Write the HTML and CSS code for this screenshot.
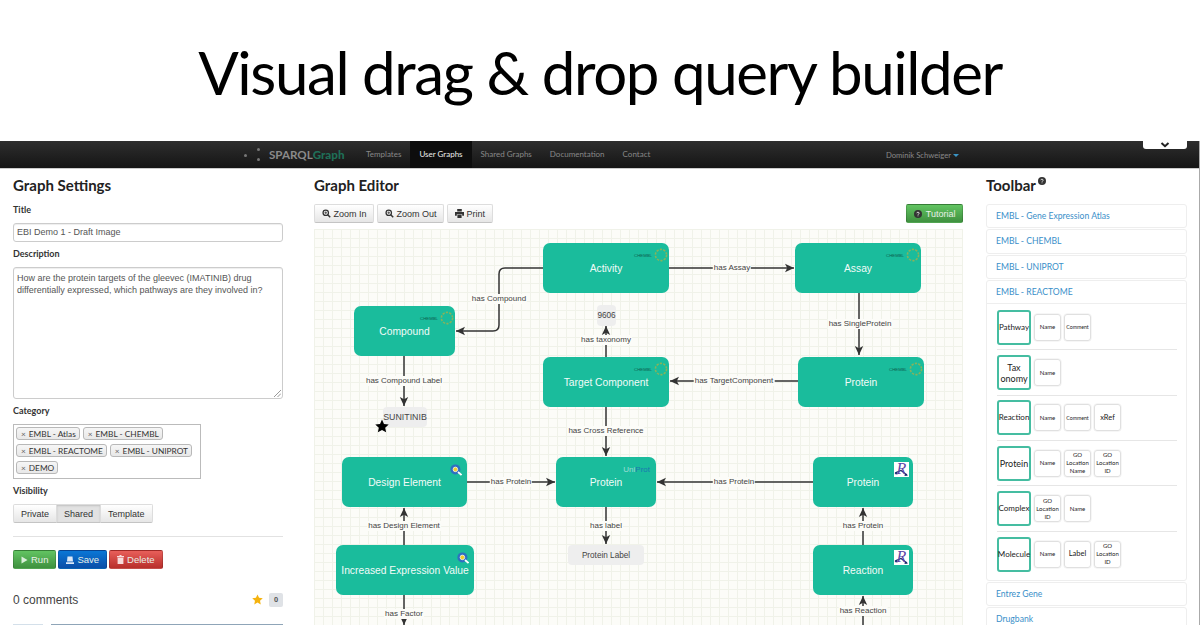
FILE: index.html
```html
<!DOCTYPE html>
<html lang="en">
<head>
    <meta charset="UTF-8">
    <title>Visual drag &amp; drop query builder</title>
    <link rel="stylesheet" href="styles.css">
</head>
<body>
    <svg class="defs" width="0" height="0">
        <defs>
            <marker id="arrow" markerWidth="10" markerHeight="10" refX="9" refY="5" orient="auto" markerUnits="userSpaceOnUse">
                <path d="M0 0.8 L9 5 L0 9.2 L2.2 5 Z" fill="#333"/>
            </marker>
            <symbol id="zoom" viewBox="0 0 12 12">
                <circle cx="5" cy="5" r="3.6" fill="none" stroke="#333" stroke-width="1.7"/>
                <path d="M7.6 7.6 L11 11" stroke="#333" stroke-width="2"/>
                <path d="M3.2 5 H6.8 M5 3.2 V6.8" stroke="#333" stroke-width="1"/>
            </symbol>
            <symbol id="help" viewBox="0 0 12 12">
                <circle cx="6" cy="6" r="6" fill="#333"/>
                <path d="M4.2 4.8 C4.2 2.8 7.8 2.8 7.8 4.8 C7.8 6 6 6 6 7.2" fill="none" stroke="#fff" stroke-width="1.2"/>
                <rect x="5.4" y="8.2" width="1.2" height="1.2" fill="#fff"/>
            </symbol>
            <symbol id="chembl" viewBox="0 0 16 16">
                <circle cx="8" cy="8" r="6.4" fill="none" stroke="#86b35c" stroke-width="1.8" stroke-dasharray="2.6 1.4"/>
            </symbol>
            <symbol id="atlas" viewBox="0 0 12 12">
                <circle cx="5.4" cy="5.4" r="5" fill="#2f6fc0"/>
                <circle cx="5.4" cy="5.4" r="2.3" fill="#f2cf2d" stroke="#fff" stroke-width="0.7"/>
                <path d="M8 8 L11.5 11" stroke="#fff" stroke-width="1.8"/>
            </symbol>
            <symbol id="reactome" viewBox="0 0 15 15">
                <rect width="15" height="15" fill="#fff"/>
                <path d="M1 11 L7 8.5 L13 13" fill="none" stroke="#1b2a6b" stroke-width="1.2"/>
                <path d="M11 11 L14 13.5 L10.5 14 Z M0.5 12 L3 9.5 L3.5 12.5 Z" fill="#1b2a6b"/>
            </symbol>
        </defs>
    </svg>

    <header class="hero">
        <h1>Visual drag &amp; drop query builder</h1>
    </header>

    <div class="app">
        <nav class="navbar">
            <div class="brand">
                <span class="brand-dots"><i></i><i></i><i></i></span>
                <span class="brand-name">SPARQL<b>Graph</b></span>
            </div>
            <ul class="nav-links">
                <li>Templates</li>
                <li class="active">User Graphs</li>
                <li>Shared Graphs</li>
                <li>Documentation</li>
                <li>Contact</li>
            </ul>
            <div class="nav-user">Dominik Schweiger<span class="caret"></span></div>
            <div class="nav-tab">
                <svg width="10" height="6" viewBox="0 0 10 6"><path d="M1.5 1 L5 4.2 L8.5 1" fill="none" stroke="#222" stroke-width="2"/></svg>
            </div>
        </nav>

        <main class="columns">
            <section class="settings">
                <h2>Graph Settings</h2>
                <label class="field-label">Title</label>
                <div class="input">EBI Demo 1 - Draft Image</div>
                <label class="field-label">Description</label>
                <div class="input textarea">How are the protein targets of the gleevec (IMATINIB) drug differentially expressed, which pathways are they involved in?
                    <svg class="grip" width="7" height="7" viewBox="0 0 7 7"><path d="M0 7 L7 0 M3.5 7 L7 3.5" stroke="#999" stroke-width="1"/></svg>
                </div>
                <label class="field-label">Category</label>
                <div class="tags">
                    <span class="tag"><i>×</i>EMBL - Atlas</span>
                    <span class="tag"><i>×</i>EMBL - CHEMBL</span>
                    <span class="tag"><i>×</i>EMBL - REACTOME</span>
                    <span class="tag"><i>×</i>EMBL - UNIPROT</span>
                    <span class="tag"><i>×</i>DEMO</span>
                </div>
                <label class="field-label">Visibility</label>
                <div class="btn-group">
                    <button class="btn">Private</button>
                    <button class="btn pressed">Shared</button>
                    <button class="btn">Template</button>
                </div>
                <hr class="divider">
                <div class="actions">
                    <button class="btn btn-green">
                        <svg width="7" height="8" viewBox="0 0 7 8"><path d="M0.5 0.5 L6.5 4 L0.5 7.5 Z" fill="#d9efd9"/></svg>Run
                    </button>
                    <button class="btn btn-blue">
                        <svg width="8" height="8" viewBox="0 0 8 8"><path d="M1.5 0.5 H6.5 L7 5.5 H1 Z M0 6.2 H8 V8 H0 Z" fill="#dbe8f7"/></svg>Save
                    </button>
                    <button class="btn btn-red">
                        <svg width="7" height="9" viewBox="0 0 7 9"><path d="M2.5 0 H4.5 V1 H7 V2.2 H0 V1 H2.5 Z M0.6 2.8 H6.4 V9 H0.6 Z" fill="#f7dcdc"/></svg>Delete
                    </button>
                </div>
                <div class="comments-head">
                    <span>0 comments</span>
                    <span class="rating">
                        <svg width="11" height="11" viewBox="0 0 24 24"><path d="M12 1 L15.4 8.4 L23.5 9.3 L17.5 14.8 L19.1 22.8 L12 18.8 L4.9 22.8 L6.5 14.8 L0.5 9.3 L8.6 8.4 Z" fill="#f5b30f"/></svg>
                        <span class="count">0</span>
                    </span>
                </div>
                <div class="comment-form">
                    <div class="comment-avatar"></div>
                    <div class="comment-box"></div>
                </div>
            </section>

            <section class="editor">
                <h2>Graph Editor</h2>
                <div class="editor-bar">
                    <button class="btn"><svg width="9" height="9"><use href="#zoom"/></svg>Zoom In</button>
                    <button class="btn"><svg width="9" height="9"><use href="#zoom"/></svg>Zoom Out</button>
                    <button class="btn">
                        <svg width="9" height="9" viewBox="0 0 9 9"><path d="M2.2 0 H6.8 V2.5 H2.2 Z M0 3 H9 V6.8 H7.2 V5.2 H1.8 V6.8 H0 Z M2.4 5.8 H6.6 V9 H2.4 Z" fill="#333"/></svg>Print
                    </button>
                    <button class="btn btn-green tutorial"><svg width="8" height="8"><use href="#help"/></svg>Tutorial</button>
                </div>

                <div class="canvas">
                    <svg class="edges" width="649" height="396" viewBox="0 0 649 396">
                        <g fill="none" stroke="#333" stroke-width="1.5" marker-end="url(#arrow)">
                            <path d="M229 39 H191 Q185 39 185 45 V96 Q185 102 179 102 H142"/>
                            <path d="M355 39 H480"/>
                            <path d="M545 64 V126"/>
                            <path d="M292 128 V97"/>
                            <path d="M484 152 H356"/>
                            <path d="M90 127 V177"/>
                            <path d="M292 178 V227"/>
                            <path d="M153 253 H241"/>
                            <path d="M499 253 H343"/>
                            <path d="M292 278 V315"/>
                            <path d="M90 316 V279"/>
                            <path d="M549 316 V279"/>
                            <path d="M549 396 V367"/>
                            <path d="M90 366 V396"/>
                        </g>
                    </svg>

                    <span class="edge-label e-compound">has Compound</span>
                    <span class="edge-label e-assay">has Assay</span>
                    <span class="edge-label e-single">has SingleProtein</span>
                    <span class="edge-label e-taxonomy">has taxonomy</span>
                    <span class="edge-label e-target">has TargetComponent</span>
                    <span class="edge-label e-cmplabel">has Compound Label</span>
                    <span class="edge-label e-cross">has Cross Reference</span>
                    <span class="edge-label e-protein1">has Protein</span>
                    <span class="edge-label e-protein2">has Protein</span>
                    <span class="edge-label e-label">has label</span>
                    <span class="edge-label e-design">has Design Element</span>
                    <span class="edge-label e-protein3">has Protein</span>
                    <span class="edge-label e-factor">has Factor</span>
                    <span class="edge-label e-reaction">has Reaction</span>

                    <div class="node n-activity">Activity<span class="src-chembl">CHEMBL<svg width="14" height="14"><use href="#chembl"/></svg></span></div>
                    <div class="node n-assay">Assay<span class="src-chembl">CHEMBL<svg width="14" height="14"><use href="#chembl"/></svg></span></div>
                    <div class="node n-compound">Compound<span class="src-chembl">CHEMBL<svg width="14" height="14"><use href="#chembl"/></svg></span></div>
                    <div class="node n-target">Target Component<span class="src-chembl">CHEMBL<svg width="14" height="14"><use href="#chembl"/></svg></span></div>
                    <div class="node n-protein-a">Protein<span class="src-chembl">CHEMBL<svg width="14" height="14"><use href="#chembl"/></svg></span></div>
                    <div class="node n-design">Design Element<svg class="src-icon" width="12" height="12"><use href="#atlas"/></svg></div>
                    <div class="node n-protein-b">Protein<span class="src-uniprot">Uni<b>Prot</b></span></div>
                    <div class="node n-protein-c">Protein<span class="src-reactome"><svg width="15" height="15"><use href="#reactome"/></svg><i>R</i></span></div>
                    <div class="node n-expression">Increased Expression Value<svg class="src-icon" width="12" height="12"><use href="#atlas"/></svg></div>
                    <div class="node n-reaction">Reaction<span class="src-reactome"><svg width="15" height="15"><use href="#reactome"/></svg><i>R</i></span></div>

                    <div class="literal l-9606">9606</div>
                    <div class="literal l-sunitinib">SUNITINIB</div>
                    <div class="literal l-protein">Protein Label</div>
                    <svg class="return-star" width="14" height="14" viewBox="0 0 24 24"><path d="M12 1 L15.4 8.4 L23.5 9.3 L17.5 14.8 L19.1 22.8 L12 18.8 L4.9 22.8 L6.5 14.8 L0.5 9.3 L8.6 8.4 Z" fill="#000"/></svg>
                </div>
            </section>

            <aside class="toolbar">
                <h2>Toolbar<svg class="help" width="8" height="8"><use href="#help"/></svg></h2>
                <div class="panel"><a class="panel-head">EMBL - Gene Expression Atlas</a></div>
                <div class="panel"><a class="panel-head">EMBL - CHEMBL</a></div>
                <div class="panel"><a class="panel-head">EMBL - UNIPROT</a></div>
                <div class="panel">
                    <a class="panel-head">EMBL - REACTOME</a>
                    <div class="panel-body">
                        <div class="tool-row">
                            <div class="tool-main">Pathway</div>
                            <div class="tool-prop">Name</div>
                            <div class="tool-prop tiny">Comment</div>
                        </div>
                        <div class="tool-row">
                            <div class="tool-main large">Tax<br>onomy</div>
                            <div class="tool-prop">Name</div>
                        </div>
                        <div class="tool-row">
                            <div class="tool-main">Reaction</div>
                            <div class="tool-prop">Name</div>
                            <div class="tool-prop tiny">Comment</div>
                            <div class="tool-prop big">xRef</div>
                        </div>
                        <div class="tool-row">
                            <div class="tool-main large">Protein</div>
                            <div class="tool-prop">Name</div>
                            <div class="tool-prop">GO Location Name</div>
                            <div class="tool-prop">GO Location ID</div>
                        </div>
                        <div class="tool-row">
                            <div class="tool-main">Complex</div>
                            <div class="tool-prop">GO Location ID</div>
                            <div class="tool-prop">Name</div>
                        </div>
                        <div class="tool-row">
                            <div class="tool-main">Molecule</div>
                            <div class="tool-prop">Name</div>
                            <div class="tool-prop big">Label</div>
                            <div class="tool-prop">GO Location ID</div>
                        </div>
                    </div>
                </div>
                <div class="panel"><a class="panel-head">Entrez Gene</a></div>
                <div class="panel"><a class="panel-head">Drugbank</a></div>
            </aside>
        </main>
    </div>
</body>
</html>
```

FILE: styles.css
```css
html, body {
    height: 625px;
    margin: 0;
    overflow: hidden;
    background-color: #fff;
}
body {
    font-family: "Liberation Sans", Arial, sans-serif;
    font-size: 9px;
    color: #333;
}
.defs {
    position: absolute;
}
.hero {
    height: 141px;
    display: flex;
    align-items: center;
    justify-content: center;
}
.hero h1 {
    margin: 0;
    padding-top: 2px;
    font-family: Lato, sans-serif;
    font-weight: 400;
    font-size: 60px;
    letter-spacing: -1.4px;
    color: #000;
}
.app {
    height: 484px;
    overflow: hidden;
    border-right: 1px solid #aaa;
}

/* navbar */
.navbar {
    height: 28px;
    display: flex;
    align-items: center;
    padding-left: 243px;
    background: linear-gradient(#2e2e2e, #151515);
    border-bottom: 1px solid #ccc;
    box-sizing: border-box;
    position: relative;
    font-family: Lato, sans-serif;
    font-size: 8px;
    color: #888;
}
.brand {
    display: flex;
    align-items: center;
    width: 114px;
}
.brand-dots {
    width: 26px;
    height: 14px;
    position: relative;
}
.brand-dots i {
    position: absolute;
    width: 3px;
    height: 3px;
    border-radius: 50%;
    background-color: #777;
}
.brand-dots i:nth-child(1) { left: 1px; top: 6px; }
.brand-dots i:nth-child(2) { left: 14px; top: 0; }
.brand-dots i:nth-child(3) { left: 14px; top: 10px; }
.brand-name {
    font-size: 11.6px;
    font-weight: 700;
    color: #8a8a8a;
}
.brand-name b {
    color: #1f6f58;
}
.nav-links {
    list-style: none;
    display: flex;
    margin: 0;
    padding: 0;
    height: 100%;
}
.nav-links li {
    padding: 0 9px;
    line-height: 26px;
    white-space: nowrap;
}
.nav-links li.active {
    background-color: #0d0d0d;
    color: #eee;
}
.nav-user {
    margin-left: auto;
    margin-right: 240px;
    font-size: 7.7px;
    white-space: nowrap;
}
.caret {
    display: inline-block;
    margin-left: 2px;
    vertical-align: middle;
    border-top: 3px solid #3a94c4;
    border-left: 3px solid transparent;
    border-right: 3px solid transparent;
}
.nav-tab {
    position: absolute;
    top: 0;
    right: 12px;
    width: 44px;
    height: 8px;
    background-color: #fff;
    border-radius: 0 0 3px 3px;
    display: flex;
    justify-content: center;
    align-items: center;
}

/* columns */
.columns {
    display: flex;
    gap: 23px;
    padding-left: 13px;
}
h2 {
    margin: 0;
    height: 35px;
    line-height: 33px;
    font-family: Lato, sans-serif;
    font-size: 15px;
    font-weight: 700;
    color: #222;
    white-space: nowrap;
}
.settings {
    width: 270px;
    margin-right: 8px;
}
.settings h2 {
    height: 34px;
}
.editor {
    width: 649px;
}
.toolbar {
    width: 201px;
}

/* left column */
.field-label {
    display: block;
    height: 20px;
    line-height: 14px;
    font-family: Lato, sans-serif;
    font-size: 9px;
    font-weight: 700;
}
.input {
    height: 19px;
    line-height: 17px;
    padding: 0 3px;
    margin-bottom: 5px;
    box-sizing: border-box;
    border: 1px solid #ccc;
    border-radius: 3px;
    color: #555;
    box-shadow: inset 0 1px 1px rgba(0, 0, 0, 0.07);
}
.textarea {
    height: 132px;
    padding: 4px 3px;
    line-height: 12px;
    position: relative;
}
.grip {
    position: absolute;
    right: 1px;
    bottom: 1px;
}
.tags {
    width: 188px;
    height: 55px;
    box-sizing: border-box;
    padding: 2px;
    margin-bottom: 5px;
    border: 1px solid #bbb;
    display: flex;
    flex-wrap: wrap;
    align-content: flex-start;
    gap: 4px 3px;
}
.tag {
    height: 13px;
    line-height: 12px;
    padding: 0 3px 0 4px;
    box-sizing: border-box;
    border: 1px solid #b8b8b8;
    border-radius: 3px;
    background: linear-gradient(#f6f6f6, #e8e8e8);
    font-family: Lato, sans-serif;
    font-size: 8.3px;
    white-space: nowrap;
}
.tag i {
    font-style: normal;
    color: #666;
    margin-right: 3px;
}
.btn {
    height: 19px;
    padding: 0 7px;
    display: inline-flex;
    align-items: center;
    justify-content: center;
    gap: 3px;
    border: 1px solid #ddd;
    border-bottom-color: #c4c4c4;
    border-radius: 2px;
    background: linear-gradient(#fff, #e6e6e6);
    font-family: "Liberation Sans", Arial, sans-serif;
    font-size: 9px;
    color: #333;
    white-space: nowrap;
}
.btn-group {
    display: flex;
}
.btn-group .btn {
    border-radius: 0;
    margin-left: -1px;
}
.btn-group .btn:first-child {
    margin-left: 0;
    border-radius: 2px 0 0 2px;
}
.btn-group .btn:last-child {
    border-radius: 0 2px 2px 0;
}
.btn.pressed {
    background: #e2e2e2;
    box-shadow: inset 0 1px 2px rgba(0, 0, 0, 0.15);
}
.divider {
    border: 0;
    border-top: 1px solid #e2e2e2;
    margin: 13px 0 13px;
}
.actions {
    display: flex;
    gap: 2px;
}
.actions .btn {
    font-size: 9.5px;
}
.btn-green, .btn-blue, .btn-red {
    border: 1px solid rgba(0, 0, 0, 0.15);
    color: #e8f0e8;
}
.btn-green {
    background: linear-gradient(#62c462, #3f913f);
}
.btn-blue {
    background: linear-gradient(#0a77d6, #0a4ea8);
}
.btn-red {
    background: linear-gradient(#e85f5a, #b82f2b);
}
.comments-head {
    display: flex;
    justify-content: space-between;
    align-items: center;
    margin-top: 23px;
    height: 15px;
    font-size: 12px;
    color: #444;
}
.rating {
    display: flex;
    align-items: center;
    gap: 6px;
}
.count {
    width: 14px;
    height: 14px;
    line-height: 14px;
    text-align: center;
    font-size: 7.5px;
    font-weight: 700;
    border-radius: 2px;
    background-color: #dfe2e6;
    color: #555;
}
.comment-form {
    display: flex;
    gap: 8px;
    margin-top: 17px;
}
.comment-avatar {
    width: 30px;
    height: 20px;
    background-color: #d4e0ea;
}
.comment-box {
    flex: 1;
    height: 20px;
    border-top: 1px solid #8fa5b8;
}

/* graph editor */
.editor-bar {
    display: flex;
    gap: 3px;
    margin: 0 0 6px;
}
.editor-bar .btn {
    padding: 0 6.5px;
}
.tutorial {
    margin-left: auto;
}
.tutorial svg {
    margin-right: 1px;
}
.canvas {
    position: relative;
    height: 396px;
    overflow: hidden;
    background-color: #fcfcf8;
    background-image:
        linear-gradient(#f0f2e9 1px, transparent 1px),
        linear-gradient(90deg, #f0f2e9 1px, transparent 1px);
    background-size: 9px 9px;
}
.edges {
    position: absolute;
    left: 0;
    top: 0;
}
.edge-label {
    position: absolute;
    transform: translate(-50%, -50%);
    padding: 0 1px;
    background-color: #fcfcf8;
    font-size: 8px;
    line-height: 10px;
    color: #444;
    white-space: nowrap;
}
.e-compound { left: 185px; top: 70px; }
.e-assay { left: 418px; top: 39px; }
.e-single { left: 546px; top: 95px; }
.e-taxonomy { left: 292px; top: 111px; }
.e-target { left: 420px; top: 152px; }
.e-cmplabel { left: 90px; top: 152px; }
.e-cross { left: 292px; top: 202px; }
.e-protein1 { left: 197px; top: 253px; }
.e-protein2 { left: 420px; top: 253px; }
.e-label { left: 292px; top: 297px; }
.e-design { left: 90px; top: 297px; }
.e-protein3 { left: 549px; top: 297px; }
.e-factor { left: 90px; top: 385px; }
.e-reaction { left: 549px; top: 382px; }

.node {
    position: absolute;
    height: 50px;
    display: flex;
    align-items: center;
    justify-content: center;
    box-sizing: border-box;
    border-radius: 7px;
    background-color: #1abc9c;
    font-size: 10.3px;
    color: #f2fbf8;
    white-space: nowrap;
}
.n-activity { left: 229px; top: 14px; width: 126px; }
.n-assay { left: 481px; top: 14px; width: 126px; }
.n-compound { left: 40px; top: 77px; width: 101px; }
.n-target { left: 229px; top: 128px; width: 126px; }
.n-protein-a { left: 484px; top: 128px; width: 126px; }
.n-design { left: 28px; top: 228px; width: 125px; }
.n-protein-b { left: 242px; top: 228px; width: 100px; }
.n-protein-c { left: 499px; top: 228px; width: 100px; }
.n-expression { left: 22px; top: 316px; width: 138px; }
.n-reaction { left: 499px; top: 316px; width: 100px; }

.src-chembl {
    position: absolute;
    top: 5px;
    right: 1px;
    display: flex;
    align-items: center;
    gap: 2px;
    font-size: 4.3px;
    color: #0c5d50;
}
.src-icon {
    position: absolute;
    top: 7px;
    right: 5px;
}
.src-uniprot {
    position: absolute;
    top: 8px;
    right: 6px;
    font-size: 8px;
    color: #9fdcd6;
}
.src-uniprot b {
    font-weight: 400;
    color: #1a78b0;
}
.src-reactome {
    position: absolute;
    top: 5px;
    right: 4px;
    width: 15px;
    height: 15px;
    line-height: 13px;
    text-align: center;
}
.src-reactome svg {
    position: absolute;
    left: 0;
    top: 0;
}
.src-reactome i {
    position: relative;
    font-family: "Liberation Serif", serif;
    font-size: 16px;
    color: #5b46a8;
}
.literal {
    position: absolute;
    display: flex;
    align-items: center;
    justify-content: center;
    border-radius: 4px;
    background-color: #eeeeee;
    font-size: 8.2px;
    color: #444;
}
.l-9606 { left: 283px; top: 76px; width: 19px; height: 21px; }
.l-sunitinib { left: 69px; top: 178px; width: 44px; height: 20px; font-size: 8.8px; }
.l-protein { left: 254px; top: 316px; width: 76px; height: 20px; }
.return-star {
    position: absolute;
    left: 61px;
    top: 190px;
}

/* toolbar */
.help {
    vertical-align: top;
    margin: 8px 0 0 2px;
}
.panel {
    border: 1px solid #eee;
    border-radius: 3px;
    box-sizing: border-box;
    margin-bottom: 1px;
}
.panel-head {
    display: block;
    height: 22.3px;
    line-height: 22px;
    padding-left: 9px;
    font-family: Lato, sans-serif;
    font-size: 8.6px;
    color: #3a8fc9;
}
.panel-body {
    border-top: 1px solid #eee;
    padding: 1px 9px 0 10px;
    height: 277px;
    box-sizing: border-box;
}
.tool-row {
    display: flex;
    gap: 3px;
    align-items: center;
    height: 45.3px;
    box-sizing: border-box;
    border-bottom: 1px solid #e6e6e6;
    font-family: Lato, sans-serif;
    text-align: center;
    color: #222;
}
.tool-row:last-child {
    border-bottom: 0;
}
.tool-main {
    width: 34px;
    height: 35px;
    flex: none;
    display: flex;
    align-items: center;
    justify-content: center;
    box-sizing: border-box;
    border: 2px solid #45bda1;
    border-radius: 3px;
    font-size: 8px;
    line-height: 11px;
    white-space: nowrap;
}
.tool-main.large {
    font-size: 9px;
}
.tool-prop {
    width: 27px;
    height: 27px;
    flex: none;
    display: flex;
    align-items: center;
    justify-content: center;
    box-sizing: border-box;
    border: 1px solid #e0e0e0;
    box-shadow: 0 0 0 0.5px #eee;
    border-radius: 3px;
    font-size: 6px;
    line-height: 8px;
}
.tool-prop.tiny {
    font-size: 5.2px;
}
.tool-prop.big {
    font-size: 7.5px;
}
```
